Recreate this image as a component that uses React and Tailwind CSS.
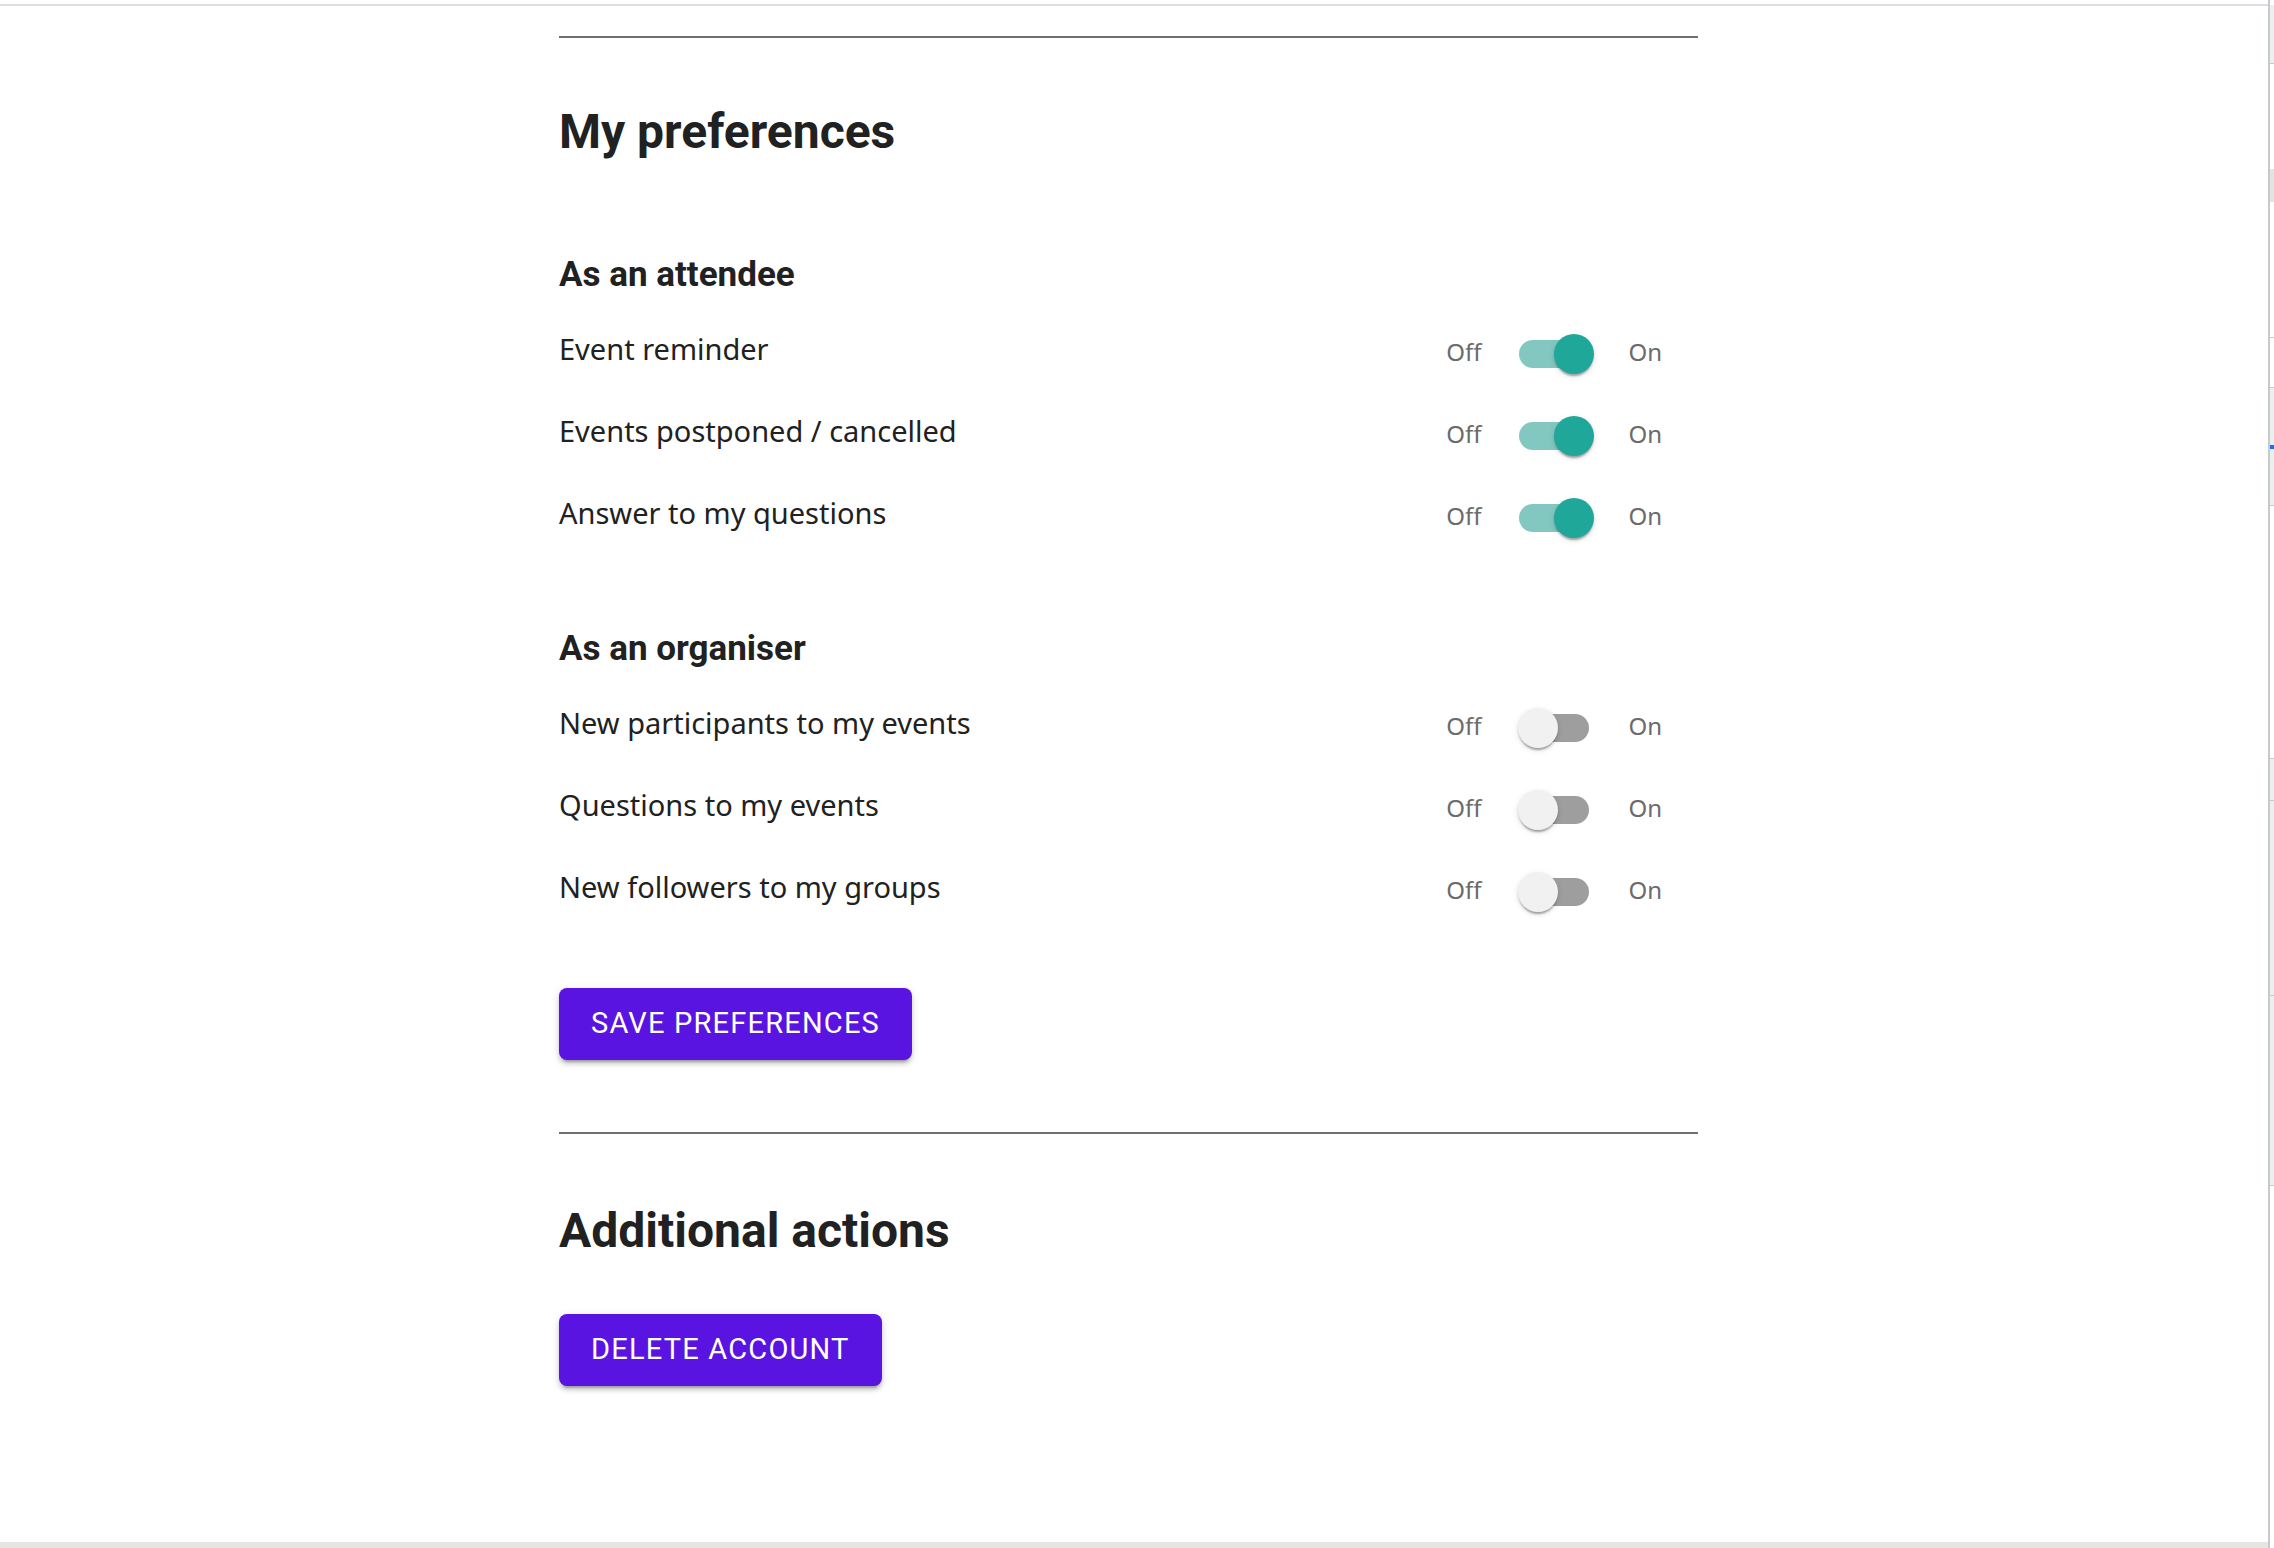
import React from "react";

const attendee = ["Event reminder", "Events postponed / cancelled", "Answer to my questions"];
const organiser = ["New participants to my events", "Questions to my events", "New followers to my groups"];

function Switch({ on }) {
  return (
    <div className="relative w-[78px] h-[40px] ml-[35px] shrink-0">
      <div
        className={
          "absolute left-[3px] top-[6px] w-[70px] h-[28px] rounded-full " +
          (on ? "bg-[#82c8c1]" : "bg-[#9e9e9e]")
        }
      />
      <div
        className={
          "absolute top-0 w-[40px] h-[40px] rounded-full shadow-[0_4px_2px_-2px_rgba(0,0,0,0.2),0_2px_2px_0_rgba(0,0,0,0.14),0_2px_6px_0_rgba(0,0,0,0.12)] " +
          (on ? "left-[38px] bg-[#1fa79a]" : "left-[2px] bg-[#f1f1f1]")
        }
      />
    </div>
  );
}

function Row({ label, on }) {
  return (
    <div className="flex items-center justify-between h-[82px]">
      <div className="pb-[10px] text-[29px] leading-[38px] text-[#212121] font-['Noto_Sans',sans-serif]">
        {label}
      </div>
      <div className="flex items-center pr-[36px] font-['Noto_Sans',sans-serif] text-[24px] leading-[32px] text-[#6b6b6b]">
        <span className="pb-[4px]">Off</span>
        <Switch on={on} />
        <span className="pb-[4px] ml-[34px]">On</span>
      </div>
    </div>
  );
}

const btn =
  "self-start h-[72px] px-[32px] rounded-[8px] bg-[#5a14e2] text-white uppercase text-[29px] font-normal tracking-[1.2px] font-['Roboto',sans-serif] shadow-[0_6px_2px_-4px_rgba(0,0,0,0.2),0_4px_4px_0_rgba(0,0,0,0.14),0_2px_10px_0_rgba(0,0,0,0.12)] flex items-center";

const h2 = "text-[35px] leading-[40px] font-bold text-[#212121] font-['Roboto',sans-serif]";

export default function App() {
  return (
    <div className="flex h-[1548px] w-full bg-white overflow-hidden">
      <div className="flex-1 flex flex-col">
        <div className="h-[4px] shrink-0" />
        <div className="h-[2px] bg-[#dcdde0] shrink-0" />
        <main className="flex-1 pl-[559px]">
          <div className="w-[1139px] flex flex-col">
            <div className="mt-[30px] h-[2px] bg-[#6f6f6f]" />
            <h1 className="mt-[66px] text-[48px] leading-[56px] font-bold text-[#212121] font-['Roboto',sans-serif]">
              My preferences
            </h1>
            <h2 className={"mt-[95px] " + h2}>As an attendee</h2>
            <div className="mt-[18px] flex flex-col">
              {attendee.map((l) => (
                <Row key={l} label={l} on />
              ))}
            </div>
            <h2 className={"mt-[70px] " + h2}>As an organiser</h2>
            <div className="mt-[18px] flex flex-col">
              {organiser.map((l) => (
                <Row key={l} label={l} on={false} />
              ))}
            </div>
            <button className={"mt-[55px] " + btn}>Save preferences</button>
            <div className="mt-[72px] h-[2px] bg-[#6f6f6f]" />
            <h1 className="mt-[69px] text-[48px] leading-[56px] font-bold text-[#212121] font-['Roboto',sans-serif]">
              Additional actions
            </h1>
            <button className={"mt-[55px] " + btn}>Delete account</button>
          </div>
        </main>
        <div className="h-[6px] bg-[#e5e6e1] shrink-0" />
      </div>
      <div className="w-[2px] bg-[#c8c9cc] shrink-0" />
      <div className="w-[4px] shrink-0 flex flex-col bg-white">
        <div className="h-[5px]" />
        <div className="h-[58px] bg-[#eceff0]" />
        <div className="h-[1px] bg-[#c8c9cc]" />
        <div className="h-[105px]" />
        <div className="h-[33px] bg-[#e3e3e3]" />
        <div className="h-[135px]" />
        <div className="h-[1px] bg-[#c8c9cc]" />
        <div className="h-[49px]" />
        <div className="h-[1px] bg-[#c8c9cc]" />
        <div className="h-[57px] bg-[#eceff0]" />
        <div className="h-[4px] bg-[#1a73e8]" />
        <div className="h-[56px] bg-[#eceff0]" />
        <div className="h-[1px] bg-[#c8c9cc]" />
        <div className="h-[252px]" />
        <div className="h-[1px] bg-[#c8c9cc]" />
        <div className="h-[41px] bg-[#eceff0]" />
        <div className="h-[1px] bg-[#c8c9cc]" />
        <div className="h-[194px] bg-[#eceff0]" />
        <div className="h-[1px] bg-[#c8c9cc]" />
        <div className="h-[189px] bg-[#eceff0]" />
        <div className="h-[1px] bg-[#c8c9cc]" />
      </div>
    </div>
  );
}
